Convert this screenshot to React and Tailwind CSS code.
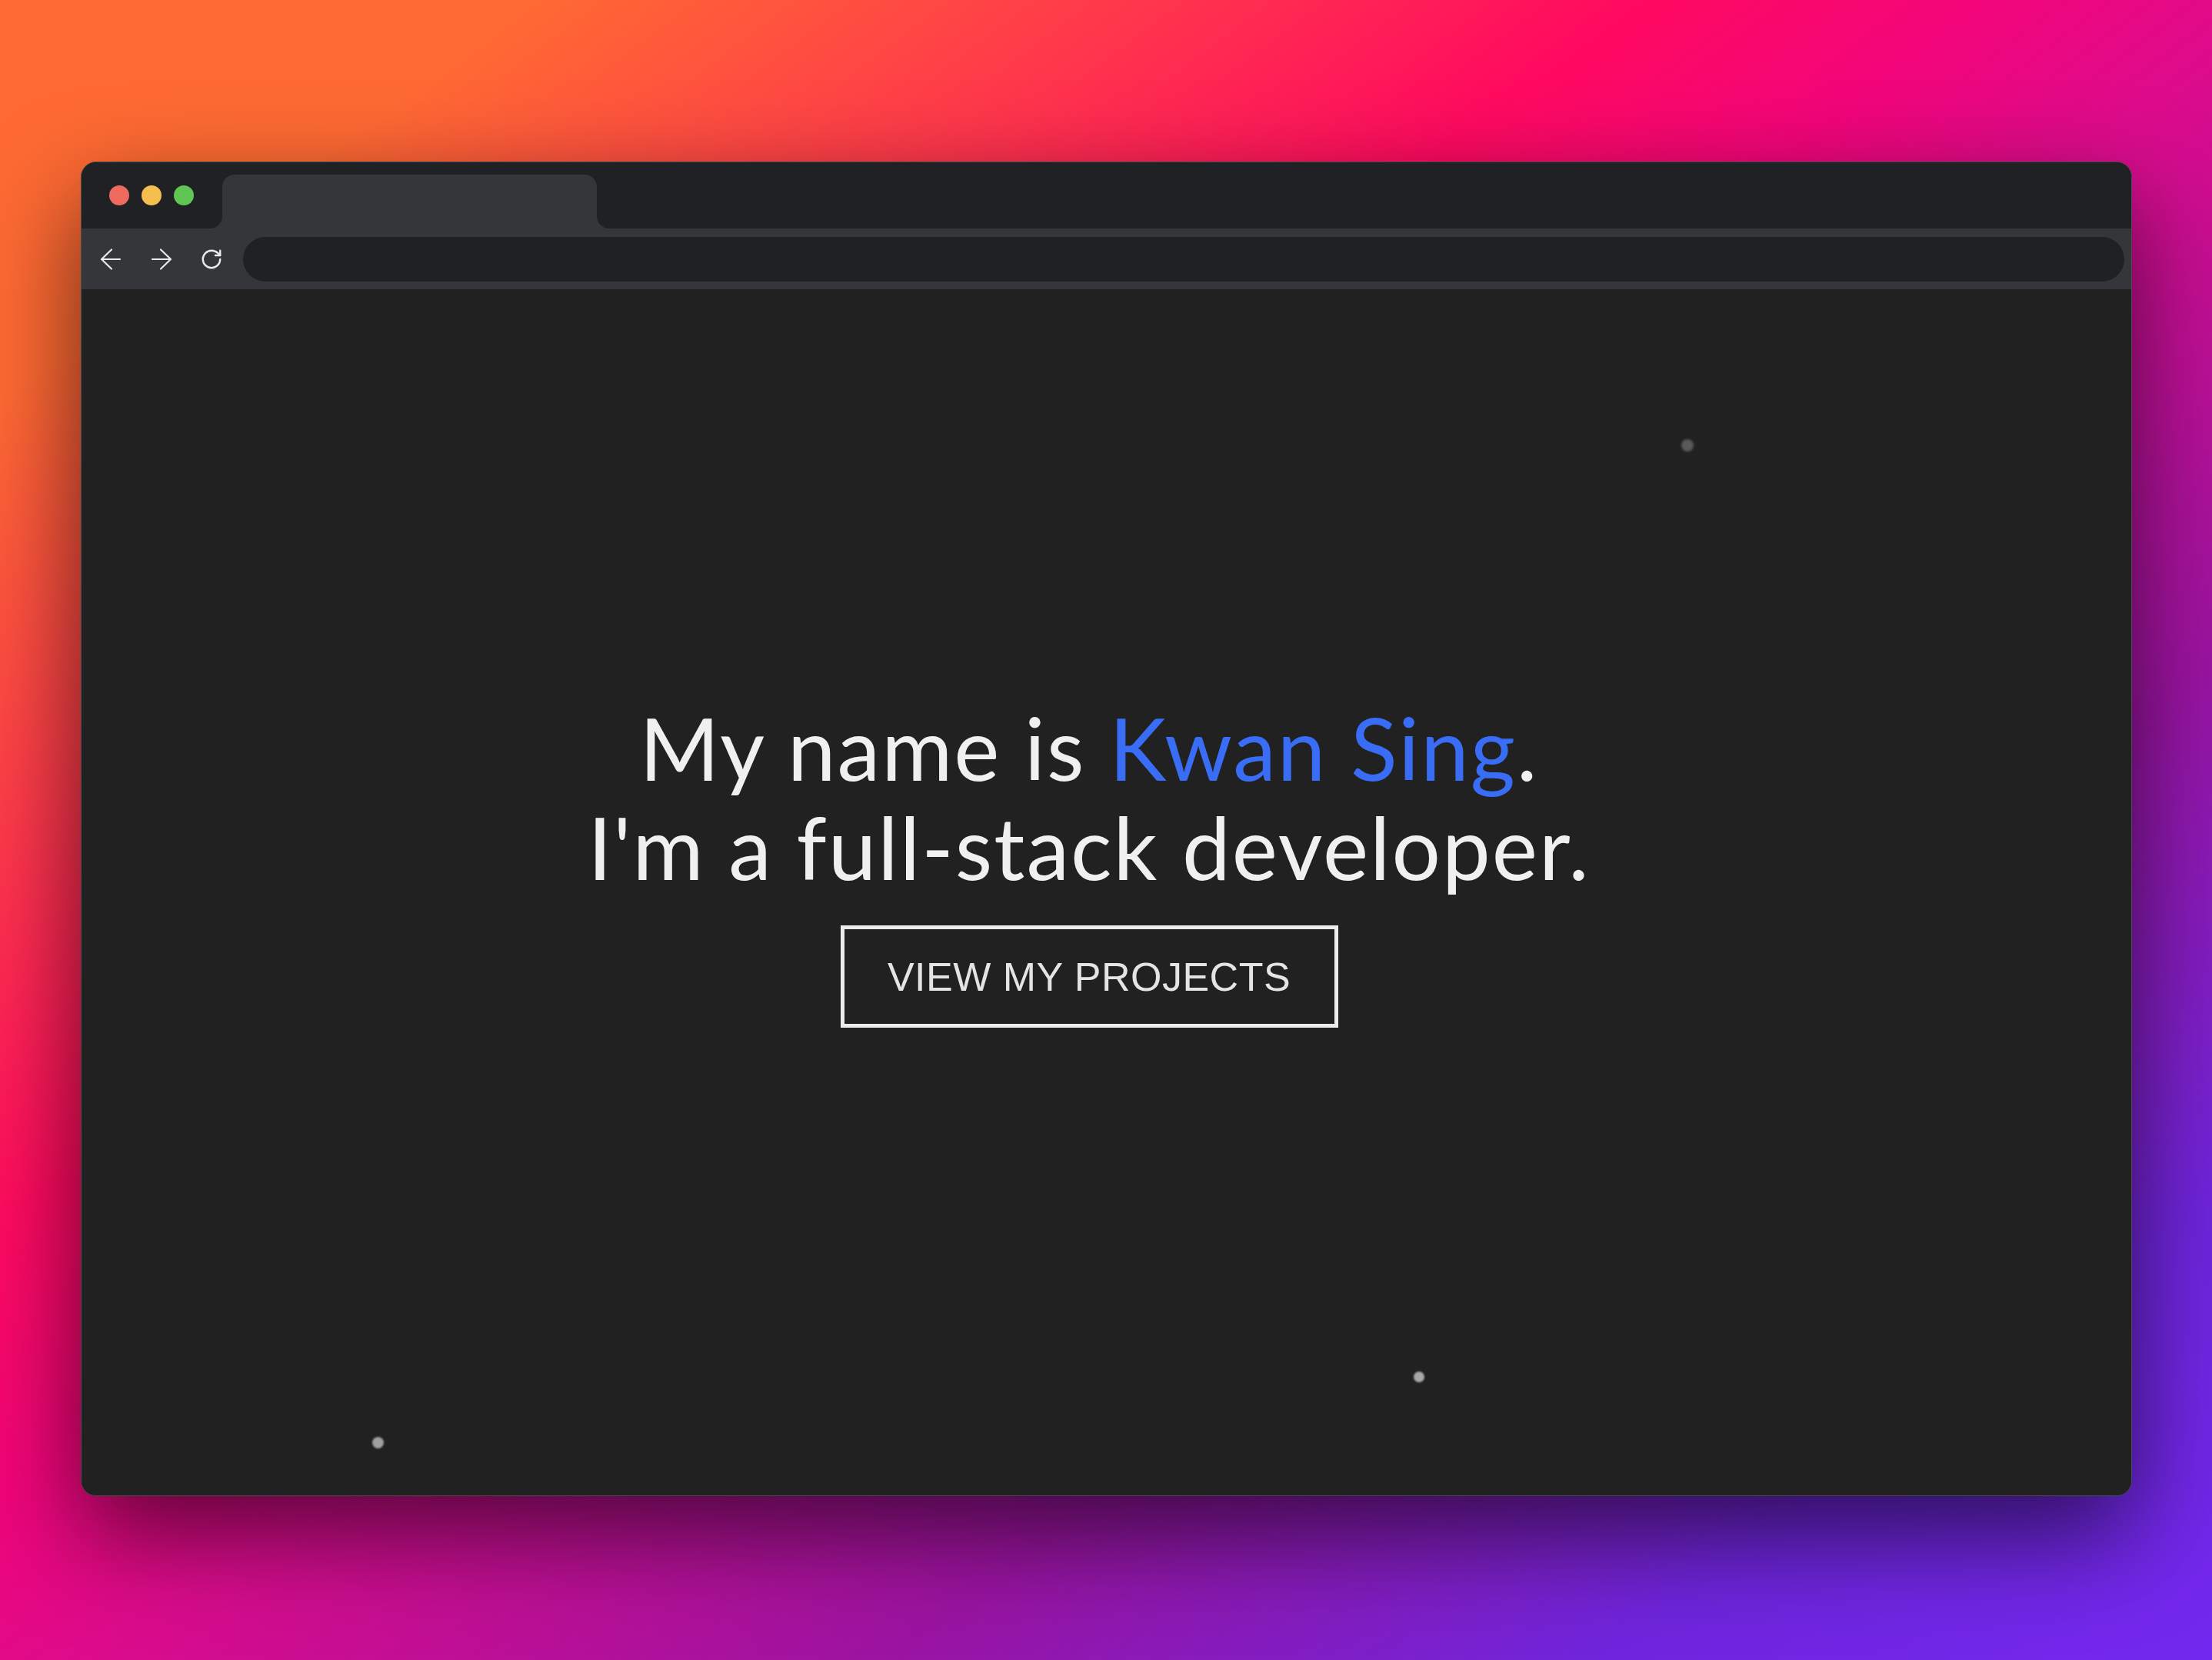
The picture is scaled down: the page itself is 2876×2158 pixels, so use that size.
import React from "react";
import { RotateCw } from "lucide-react";

function Arrow({ flip }) {
  return (
    <svg width="28" height="28" viewBox="0 0 28 28" fill="none" stroke="#e8eaed" strokeWidth="2.2" strokeLinecap="round" strokeLinejoin="round" className={flip ? "-scale-x-100" : ""}>
      <path d="M26 14H2M15 1.5L2 14l13 12.5" />
    </svg>
  );
}

export default function App() {
  return (
    <div className="w-[2876px] h-[2158px] overflow-hidden bg-[linear-gradient(to_bottom_right,#ff6b33_0%,#ff6a33_12%,#ff3a4a_25%,#ff0a60_37%,#f2057a_45%,#dc0c8c_52%,#9b14a2_70%,#6f25dc_86%,#7429f0_100%)] pl-[105px] pt-[210px]">
      <div className="w-[2667px] h-[1735px] rounded-[20px] overflow-hidden border border-[#4a4a50] bg-[#212121] shadow-[0_50px_130px_rgba(0,0,0,0.6)] flex flex-col">
        {/* title bar */}
        <div className="h-[86px] bg-[#202124] flex items-end shrink-0">
          <div className="h-full flex items-center gap-[16px] pl-[36px] w-[183px] shrink-0">
            <div className="w-[26px] h-[26px] rounded-full bg-[#ee6a5f]" />
            <div className="w-[26px] h-[26px] rounded-full bg-[#f5bf4f]" />
            <div className="w-[26px] h-[26px] rounded-full bg-[#61c554]" />
          </div>
          <div className="relative w-[487px] h-[70px] bg-[#35363a] rounded-t-[16px]">
            <div className="absolute bottom-0 -left-[16px] w-[16px] h-[16px] bg-[#35363a]">
              <div className="w-full h-full bg-[#202124] rounded-br-[16px]" />
            </div>
            <div className="absolute bottom-0 -right-[16px] w-[16px] h-[16px] bg-[#35363a]">
              <div className="w-full h-full bg-[#202124] rounded-bl-[16px]" />
            </div>
          </div>
        </div>
        {/* toolbar */}
        <div className="h-[79px] bg-[#35363a] flex items-center shrink-0 pr-[9px]">
          <div className="flex items-center w-[210px] shrink-0 text-[#e8eaed]">
            <div className="w-[28px] ml-[24px] flex">
              <Arrow />
            </div>
            <div className="w-[28px] ml-[38px] flex">
              <Arrow flip />
            </div>
            <div className="w-[30px] ml-[36px] flex">
              <RotateCw size={32} strokeWidth={1.9} />
            </div>
          </div>
          <div className="flex-1 h-[58px] rounded-full bg-[#202124]" />
        </div>
        {/* content */}
        <div className="relative flex-1 bg-[#212121] flex flex-col items-center pt-[531px] pr-[45px]">
          <div className="absolute left-[2080px] top-[195px] w-[16px] h-[16px] rounded-full bg-[#5a5a5a] blur-[1.5px]" />
          <div className="absolute left-[378px] top-[1492px] w-[15px] h-[15px] rounded-full bg-[#a0a0a0] blur-[1px]" />
          <div className="absolute left-[1732px] top-[1407px] w-[14px] h-[14px] rounded-full bg-[#a8a8a8] blur-[1px]" />
          <h1 className="text-center text-[112px] leading-[129px] font-normal text-[#f0f0f0] font-['Lato','Open_Sans',sans-serif] tracking-[2px]">
            My name is <span className="text-[#3a6df5]">Kwan Sing</span>.
            <br />
            I'm a full-stack developer.
          </h1>
          <button className="mt-[38px] w-[647px] h-[133px] border-[5px] border-[#ececec] flex items-center justify-center text-[52px] tracking-[0.5px] text-[#e4e4e4] font-['Liberation_Sans',Arial,sans-serif]">
            VIEW MY PROJECTS
          </button>
        </div>
      </div>
    </div>
  );
}
